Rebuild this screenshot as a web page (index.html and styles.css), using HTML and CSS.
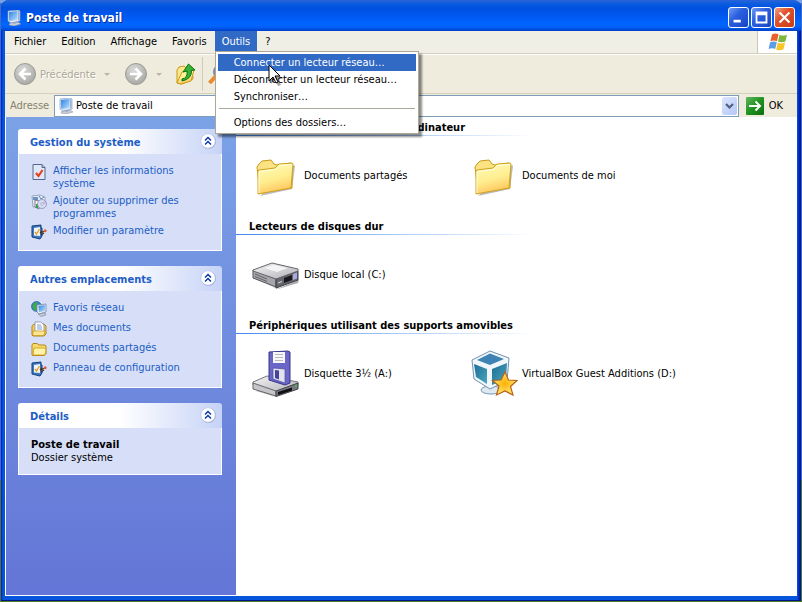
FILE: index.html
```html
<!DOCTYPE html>
<html lang="fr">
<head>
<meta charset="utf-8">
<title>Poste de travail</title>
<link rel="stylesheet" href="styles.css">
</head>
<body>
<svg class="defs" aria-hidden="true">
  <defs>
    <linearGradient id="gFolder" x1="0" y1="0" x2="0.3" y2="1"><stop offset="0" stop-color="#fffbb8"/><stop offset=".6" stop-color="#ffee90"/><stop offset="1" stop-color="#ffc860"/></linearGradient>
    <linearGradient id="gScreen" x1="0" y1="0" x2="1" y2="1"><stop offset="0" stop-color="#2f7fe0"/><stop offset="1" stop-color="#b8e4ff"/></linearGradient>
    <linearGradient id="gGo" x1="0" y1="0" x2="1" y2="1"><stop offset="0" stop-color="#5fb65f"/><stop offset=".5" stop-color="#1f931f"/><stop offset="1" stop-color="#0b6d0b"/></linearGradient>
    <linearGradient id="gMetal" x1="0" y1="0" x2="1" y2="1"><stop offset="0" stop-color="#f4f4f4"/><stop offset="1" stop-color="#b2b2b8"/></linearGradient>
    <linearGradient id="gTeal" x1="0" y1="0" x2="1" y2="1"><stop offset="0" stop-color="#1d6d96"/><stop offset="1" stop-color="#4ba6bc"/></linearGradient>
    <radialGradient id="gStar"><stop offset="0" stop-color="#ffb000"/><stop offset="1" stop-color="#ffe878"/></radialGradient>
    <radialGradient id="gRound" cx=".4" cy=".3" r=".8"><stop offset="0" stop-color="#dadada"/><stop offset="1" stop-color="#a2a29e"/></radialGradient>
  </defs>
  <symbol id="computer" viewBox="0 0 16 16">
    <path d="M4 13l8-1 3 2-7 2-5-1z" fill="#c8ccd4" stroke="#8a93a8" stroke-width=".5"/>
    <path d="M2 1l10-1 2 1v10l-9 2-3-2z" fill="#dfe8f4" stroke="#7c9cc8" stroke-width=".7"/>
    <path d="M3 2l8.500-1v8.500L4.500 11 3 10z" fill="url(#gScreen)"/>
    <path d="M12 1l1.500.500v8.500L12 10.500z" fill="#9bb4d8"/>
    <path d="M7 12h3v1.500H7z" fill="#8fa5c4"/>
  </symbol>
  <symbol id="folder" viewBox="0 -4 48 48">
    <path d="M8 41l32-7 3-23-1-1z" fill="#777" opacity=".5"/>
    <path d="M5 12l2-3 3-3 9-1 3 4 3 1 14-2 1 2v23L8 37z" fill="#fbe384" stroke="#c99a17"/>
    <path d="M6 39V16l1-1 16-2 4-4 13-1 1 1-2 24z" fill="url(#gFolder)" stroke="#d0a11c"/>
    <path d="M7 38V16.500l17-2 4-4 12-1" fill="none" stroke="#fffde0"/>
  </symbol>
  <symbol id="chevrons" viewBox="0 0 16 16">
    <circle cx="8.500" cy="8.500" r="7.500" fill="#8c98c8" opacity=".6"/>
    <circle cx="8" cy="8" r="7.200" fill="#fff" stroke="#b4c0e4" stroke-width=".6"/>
    <path d="M5 7.500l3-3 3 3M5 11.500l3-3 3 3" fill="none" stroke="#0b3aa8" stroke-width="1.500"/>
  </symbol>
  <symbol id="panelcfg" viewBox="0 0 16 16">
    <path d="M1 2l9-1v3h1v8l-2 3-8-2z" fill="#3f78c0" stroke="#123d78" stroke-width="1"/>
    <path d="M3 4l6-1v9l-6-.500z" fill="#f0f4f8"/>
    <path d="M4 8l1.500 2 3-5" fill="none" stroke="#e0a020" stroke-width="1.300"/>
    <path d="M9 9l5-2M9 9l2-2M10 11l3-2" fill="none" stroke="#443020" stroke-width="1.200"/>
    <circle cx="14.200" cy="6.800" r="1.500" fill="#e06038"/>
  </symbol>
</svg>

<div class="window">
  <header class="titlebar">
    <svg class="i16"><use href="#computer"/></svg>
    <h1>Poste de travail</h1>
    <div class="winbtns">
      <button class="wbtn" aria-label="Réduire"><svg viewBox="0 0 21 21"><path d="M5 13h8v3H5z" fill="#fff"/></svg></button>
      <button class="wbtn" aria-label="Agrandir"><svg viewBox="0 0 21 21"><path d="M4 4h13v13H4zM6 8v7h9V8z" fill="#fff" fill-rule="evenodd"/></svg></button>
      <button class="wbtn close" aria-label="Fermer"><svg viewBox="0 0 21 21"><path d="M5 5l11 11M16 5L5 16" stroke="#fff" stroke-width="2.400"/></svg></button>
    </div>
  </header>

  <div class="menubar">
    <nav class="menus">
      <button>Fichier</button>
      <button>Edition</button>
      <button>Affichage</button>
      <button>Favoris</button>
      <div class="open">
        <button class="active">Outils</button>
        <div class="dropdown">
          <button class="hover">Connecter un lecteur réseau…</button>
          <button>Déconnecter un lecteur réseau…</button>
          <button>Synchroniser…</button>
          <hr>
          <button>Options des dossiers…</button>
          <svg class="cursor" viewBox="0 0 15 22"><path d="M3 3v17l4-4 3 6 3-1-3-6h5z" fill="#000" opacity=".35"/><path d="M1 1v16l4-4 3 6 2-1-3-6h5z" fill="#fff" stroke="#000"/></svg>
        </div>
      </div>
      <button>?</button>
    </nav>
    <div class="brand">
      <svg viewBox="0 0 20 18">
        <path d="M4 1.500Q7-.5 10.500 1.200L9 8.300Q5.500 6.600 2.400 8.300z" fill="#e8602c"/>
        <path d="M11.500 1.700Q15 3.500 19 1.700L17.400 8.500Q13.500 10 10 8.600z" fill="#7cb83c"/>
        <path d="M2.100 9.300Q5.500 7.600 8.800 9.300L7.200 16Q4 14.300.600 16z" fill="#5a9ee6"/>
        <path d="M9.700 9.800Q13.500 11.200 17.100 9.600L15.500 16.300Q12 18.300 8.200 16.500z" fill="#f8c628"/>
      </svg>
    </div>
  </div>

  <div class="toolbar">
    <button class="tool" disabled>
      <svg class="i24" viewBox="0 0 24 24"><circle cx="12" cy="12" r="10.500" fill="url(#gRound)" stroke="#9b9b97"/><path d="M18 12H8M12.500 6.500L7 12l5.500 5.500" fill="none" stroke="#fff" stroke-width="2.600"/></svg>
      <span>Précédente</span>
    </button>
    <i class="arrow"></i>
    <button class="tool next" disabled aria-label="Suivante">
      <svg class="i24" viewBox="0 0 24 24"><circle cx="12" cy="12" r="10.500" fill="url(#gRound)" stroke="#9b9b97"/><path d="M6 12h10M11.500 6.500L17 12l-5.500 5.500" fill="none" stroke="#fff" stroke-width="2.600"/></svg>
    </button>
    <i class="arrow"></i>
    <button class="tool" aria-label="Dossier parent">
      <svg class="i24" viewBox="0 0 24 24"><path d="M3 21V8l2-3 5-1 2 2 6-1 1 12-11 5z" fill="#fbe78c" stroke="#c99a17"/><path d="M3 21l5-11 12-2-3 11-10 3z" fill="url(#gFolder)" stroke="#c99a17"/><path d="M8 17q6-1 5-8l-4 1 5.500-8L21 8l-3.500.500Q18 17 8 19z" fill="#35b135" stroke="#137013"/></svg>
    </button>
    <span class="divider"></span>
    <button class="tool" aria-label="Rechercher">
      <svg class="i24" viewBox="0 0 24 24"><circle cx="14" cy="10" r="7" fill="#d8ecf8" stroke="#7c8ca8" stroke-width="2"/><path d="M9 14l-6.500 7" stroke="#ec8a30" stroke-width="4"/></svg>
    </button>
  </div>

  <form class="address">
    <label for="addr">Adresse</label>
    <div class="combo">
      <svg class="i16"><use href="#computer"/></svg>
      <input id="addr" type="text" value="Poste de travail">
      <button type="button" class="drop" aria-label="Dérouler"><svg viewBox="0 0 15 17"><path d="M4 7l3.500 3.500L11 7" fill="none" stroke="#4d6185" stroke-width="2.200"/></svg></button>
    </div>
    <button type="button" class="go">
      <svg viewBox="0 0 18 18"><rect width="18" height="18" rx="1" fill="url(#gGo)"/><path d="M3 9h11M9.500 4.500L14 9l-4.500 4.500" fill="none" stroke="#fff" stroke-width="2"/></svg>
      <span>OK</span>
    </button>
  </form>

  <div class="content">
    <aside class="side">
      <section class="panel">
        <h2>Gestion du système<button aria-label="Replier"><svg><use href="#chevrons"/></svg></button></h2>
        <ul>
          <li><svg viewBox="0 0 16 16"><path d="M2 .5h9l3 3v12H2z" fill="#dfe8f8" stroke="#56688c"/><path d="M11 .5v3h3" fill="#a8bce0" stroke="#56688c"/><path d="M5 9l2.500 3 4-6" fill="none" stroke="#e8401c" stroke-width="2.200"/></svg><a href="#">Afficher les informations système</a></li>
          <li><svg viewBox="0 0 16 16"><path d="M1 2l8-1 5 2v5L5 13H2z" fill="#e8edf4" stroke="#8594ac" stroke-width=".8"/><path d="M2 3h5v3H2z" fill="#6d92c8"/><path d="M8 2l2 3 3-2" fill="none" stroke="#5d82b8"/><path d="M4 6l4 1v8l-4-2z" fill="#fafafa" stroke="#778"/><path d="M5 10h2v4H5z" fill="#2ca43c"/><circle cx="11" cy="10" r="4.500" fill="#d8dcf4" stroke="#8c8cb8" stroke-width=".8"/><path d="M11 10l3-3 1.300 2z" fill="#c0a4e8"/><circle cx="11" cy="10" r="1.300" fill="#fff" stroke="#889" stroke-width=".6"/></svg><a href="#">Ajouter ou supprimer des programmes</a></li>
          <li><svg><use href="#panelcfg"/></svg><a href="#">Modifier un paramètre</a></li>
        </ul>
      </section>
      <section class="panel">
        <h2>Autres emplacements<button aria-label="Replier"><svg><use href="#chevrons"/></svg></button></h2>
        <ul>
          <li><svg viewBox="0 0 16 16"><circle cx="5.500" cy="5.500" r="5" fill="#3c7fd8" stroke="#1d4f9c" stroke-width=".6"/><path d="M2 3q3-3 5-1L5 5l1 3-2 2Q1 7 2 3z" fill="#3cae3c"/><path d="M6 4l9-1v8l-7 2-2-2z" fill="#e4ebf4" stroke="#7889a8" stroke-width=".8"/><path d="M7.500 5L14 4v6l-6 1z" fill="url(#gScreen)"/><path d="M7 13l7-1 1 2-5 1.500z" fill="#c4cad4" stroke="#7c869c" stroke-width=".6"/></svg><a href="#">Favoris réseau</a></li>
          <li><svg viewBox="0 0 16 16"><path d="M1 14V5l2-2h10l2 2v8l-2 2H2z" fill="#f4cf63" stroke="#b48718"/><path d="M4 10V1h6l3 3v7H4z" fill="#fff" stroke="#8290b0" stroke-width=".8"/><path d="M6 4h4M6 6h5M6 8h5" stroke="#7c9cd0"/><path d="M2 10h12l-1 4.500H2z" fill="#ffe791" stroke="#c09420" stroke-width=".7"/></svg><a href="#">Mes documents</a></li>
          <li><svg viewBox="0 0 16 16"><path d="M1 14V4l1-1.500h4L8 4h6l1 1v8l-2 1.500H2z" fill="#f9d96a" stroke="#b48718"/><path d="M2 14l1-7h10l2 1-1 6z" fill="#fff3a8" stroke="#c99a17" stroke-width=".8"/></svg><a href="#">Documents partagés</a></li>
          <li><svg><use href="#panelcfg"/></svg><a href="#">Panneau de configuration</a></li>
        </ul>
      </section>
      <section class="panel">
        <h2>Détails<button aria-label="Replier"><svg><use href="#chevrons"/></svg></button></h2>
        <p><b>Poste de travail</b><br>Dossier système</p>
      </section>
    </aside>

    <main class="files">
      <section>
        <h2>Fichiers enregistrés sur cet ordinateur</h2>
        <div class="items">
          <a href="#"><svg><use href="#folder"/></svg>Documents partagés</a>
          <a href="#"><svg><use href="#folder"/></svg>Documents de moi</a>
        </div>
      </section>
      <section>
        <h2>Lecteurs de disques dur</h2>
        <div class="items">
          <a href="#"><svg viewBox="0 0 48 48"><path d="M5 29l20 10 22-9-1 3-20 6z" fill="#555" opacity=".5"/><path d="M1 20l23 9v8L1 28z" fill="#a6a6aa" stroke="#55555c"/><path d="M24 29l22-8v9l-22 8z" fill="#66666e" stroke="#3c3c44"/><path d="M1 20l19-7 26 6v2l-22 8L1 21z" fill="url(#gMetal)" stroke="#66666c"/><path d="M13 18l9-3 14 3-11 4z" fill="#fbfbfb" opacity=".8"/><path d="M32 28l8-3v5l-8 3z" fill="#18181c"/><path d="M41 24l4-1.500v6L41 30z" fill="#a9a9e0"/><path d="M3 24l12 5M3 26.500l12 5" stroke="#62626a"/><path d="M26 33l4-1.500" stroke="#ddd"/></svg>Disque local (C:)</a>
        </div>
      </section>
      <section>
        <h2>Périphériques utilisant des supports amovibles</h2>
        <div class="items">
          <a href="#"><svg viewBox="0 0 48 48"><path d="M4 42l20 6 23-11-1-3z" fill="#555" opacity=".4"/><path d="M1 33l14-6 31 6v2l-22 8L1 36z" fill="url(#gMetal)" stroke="#77777c"/><path d="M1 34l23 8v5L1 40z" fill="#c6c6ca" stroke="#66666c"/><path d="M24 42l22-8v6l-22 7.500z" fill="#77777f" stroke="#44444c"/><path d="M26 43l14-4.500v3L26 46z" fill="#101014"/><path d="M43 36l2-.5v2l-2 .5z" fill="#3fc23f"/><path d="M17 3l19-1 2 1v31l-5 2-16-5z" fill="#6a66c8" stroke="#36348c"/><path d="M21 3h12v11H21z" fill="#f6f6f6"/><path d="M23 5.500h8M23 8.500h8M23 11.500h8" stroke="#b8b8c0"/><path d="M21 19l12 1v14l-12-4z" fill="#e2e2ee" stroke="#4c4aa0" stroke-width=".7"/><path d="M23 21l4 .500v9L23 29z" fill="#45439a"/></svg>Disquette 3½ (A:)</a>
          <a href="#"><svg viewBox="0 0 48 48"><ellipse cx="21" cy="41" rx="10" ry="4" fill="#dfe9f1" stroke="#7899b4"/><path d="M2 11L20 2l19 7-2 23-17 8L4 30z" fill="#f1f6fa" stroke="#6e93b2"/><path d="M7 11l13-6.500L34 10l-14 6z" fill="#3f83b4"/><path d="M4 15l13 5v15L6 28z" fill="url(#gTeal)"/><path d="M22 20l15-6-1 16-14 6z" fill="url(#gTeal)"/><path d="M35 23l3.500 8 8.500.500-6.500 6 2.500 8.500-8-4-8.500 4 2.500-9-6.500-5.500 8.500-.500z" fill="url(#gStar)" stroke="#b56417" stroke-width="1.200"/></svg>VirtualBox Guest Additions (D:)</a>
        </div>
      </section>
    </main>
  </div>
</div>
</body>
</html>
```
FILE: styles.css
```css
* { box-sizing: border-box; }

body {
  margin: 0;
  padding: 0 1px 1px;
  min-height: 100vh;
  display: flex;
  background: linear-gradient(#7ba2e7 0 3px, #3f6cc4 3px 480px, #4c7a22 480px);
  font: 11px/13px "DejaVu Sans Condensed", "DejaVu Sans", sans-serif;
  color: #000;
}

button { font: inherit; color: inherit; border: 0; background: none; padding: 0; text-align: left; }
a { color: inherit; text-decoration: none; }
h1, h2, p, ul { margin: 0; padding: 0; font-size: inherit; }
svg { display: block; flex: none; }
.defs { position: absolute; width: 0; height: 0; }
.i16 { width: 16px; height: 16px; }
.i24 { width: 24px; height: 24px; }

.window {
  flex: 1;
  display: flex;
  flex-direction: column;
  min-width: 0;
  padding: 0 4px 4px;
  border-radius: 8px 8px 0 0;
  background: linear-gradient(90deg, #0019cf 0, #0855dd 2px, #0855dd calc(100% - 4px), #0025c0 calc(100% - 2px), #00138c);
  border-bottom: 1px solid #00138c;
}

/* Title bar */
.titlebar {
  display: flex;
  align-items: center;
  gap: 4px;
  height: 31px;
  margin: 0 -4px;
  padding: 4px 6px 0 5px;
  border-radius: 8px 8px 0 0;
  background: linear-gradient(#2a64d8 0, #0a5ce0 4px, #0050e0 8px, #0058f0 16px, #0066ff 24px, #0060f8 27px, #0040c8 31px);
  color: #fff;
}
.titlebar h1 {
  flex: 1;
  font-size: 12px;
  line-height: 18px;
  text-shadow: 1px 1px #0a2a90;
}
.winbtns { display: flex; gap: 2px; }
.wbtn {
  width: 21px;
  height: 21px;
  border: 1px solid #fff;
  border-radius: 3px;
  background: linear-gradient(135deg, #6f9cf4, #2b5fe0 40%, #1f4fd0 80%, #1840b0);
}
.wbtn svg { width: 19px; height: 19px; }
.wbtn.close { background: linear-gradient(135deg, #f0a080, #e0502c 40%, #c83c14); }

/* Menu bar */
.menubar { display: flex; height: 23px; background: #f0efe6; border-bottom: 1px solid #d3d0c0; }
.menus { flex: 1; display: flex; gap: 1px; padding-left: 2px; border-right: 1px solid #c9c6b4; }
.menus > button, .open > button { height: 21px; padding: 0 7px; }
.open { position: relative; }
.open > .active { background: #316ac5; color: #fff; }
.brand { width: 39px; display: flex; align-items: center; justify-content: center; background: #fff; }
.brand svg { width: 20px; height: 18px; }

.dropdown {
  position: absolute;
  z-index: 2;
  left: 0;
  top: 20px;
  width: 204px;
  padding: 2px;
  background: #fff;
  border: 1px solid #aca899;
  box-shadow: 3px 3px 2px rgba(0, 0, 0, .45);
}
.dropdown button { display: block; width: 100%; height: 17px; padding: 0 16px; white-space: nowrap; }
.dropdown .hover { background: #316ac5; color: #fff; }
.dropdown hr { height: 1px; margin: 3px 1px 5px; border: 0; background: #aca899; }
.cursor { position: absolute; left: 52px; top: 12px; width: 15px; height: 22px; }

/* Toolbar */
.toolbar {
  display: flex;
  align-items: center;
  height: 40px;
  padding: 0 8px;
  background: #efecdd;
  border-top: 1px solid #fff;
  border-bottom: 1px solid #d3d0c0;
}
.tool { display: flex; align-items: center; gap: 3px; color: #aca899; text-shadow: 1px 1px #fff; }
.arrow { border: 3px solid transparent; border-top-color: #b8b5a6; border-bottom: 0; margin: 0 14px 0 8px; }
.next + .arrow { margin-right: 12px; }
.divider { width: 1px; height: 34px; margin: 0 4px; background: #cfccbc; }

/* Address bar */
.address {
  display: flex;
  align-items: center;
  height: 23px;
  padding: 0 14px 0 5px;
  background: #efecdd;
}
.address label { width: 44px; color: #85826f; }
.combo {
  flex: 1;
  display: flex;
  align-items: center;
  gap: 2px;
  height: 22px;
  padding: 1px 1px 1px 3px;
  background: #fff;
  border: 1px solid #7f9db9;
}
.combo input { flex: 1; min-width: 0; padding: 0; border: 0; outline: 0; font: inherit; background: none; }
.drop { width: 15px; height: 18px; border-radius: 2px; background: linear-gradient(135deg, #dbe6fe, #b4c8f6); }
.drop svg { width: 15px; height: 17px; }
.go { display: flex; align-items: center; gap: 5px; margin-left: 7px; }
.go svg { width: 18px; height: 18px; }

/* Content */
.content { flex: 1; display: flex; min-height: 0; border-left: 1px solid #fff; border-bottom: 1px solid #fff; background: #fff; }
.side {
  width: 230px;
  padding: 12px 14px 12px 12px;
  display: flex;
  flex-direction: column;
  gap: 15px;
  background: linear-gradient(#7ba2e7, #6375d6);
}
.panel { border-radius: 3px 3px 0 0; overflow: hidden; }
.panel h2 {
  display: flex;
  align-items: center;
  justify-content: space-between;
  height: 25px;
  padding: 2px 6px 0 12px;
  background: linear-gradient(90deg, #fff 50%, #c6d3f7);
  color: #215dc6;
  font-weight: bold;
}
.panel h2 button { margin-bottom: 4px; }
.panel h2 svg { width: 16px; height: 16px; }
.panel ul, .panel p { padding: 10px 12px; background: #d6dff7; border: 1px solid #fff; border-top: 0; }
.panel ul { display: grid; gap: 4px; list-style: none; }
.panel li { display: flex; gap: 6px; min-height: 16px; align-items: flex-start; color: #215dc6; }
.panel li svg { width: 16px; height: 16px; }

.files { flex: 1; min-width: 0; display: flex; flex-direction: column; gap: 18px; padding-top: 1px; }
.files h2 {
  height: 18px;
  padding: 3px 13px 0;
  font-weight: bold;
  background: linear-gradient(90deg, #3f8af0, #fff) 0 100% / 300px 1px no-repeat;
}
.items { display: flex; flex-wrap: wrap; padding: 15px 16px 0; }
.items a { display: flex; align-items: center; gap: 4px; width: 218px; white-space: nowrap; }
.items svg { width: 48px; height: 48px; }
```
